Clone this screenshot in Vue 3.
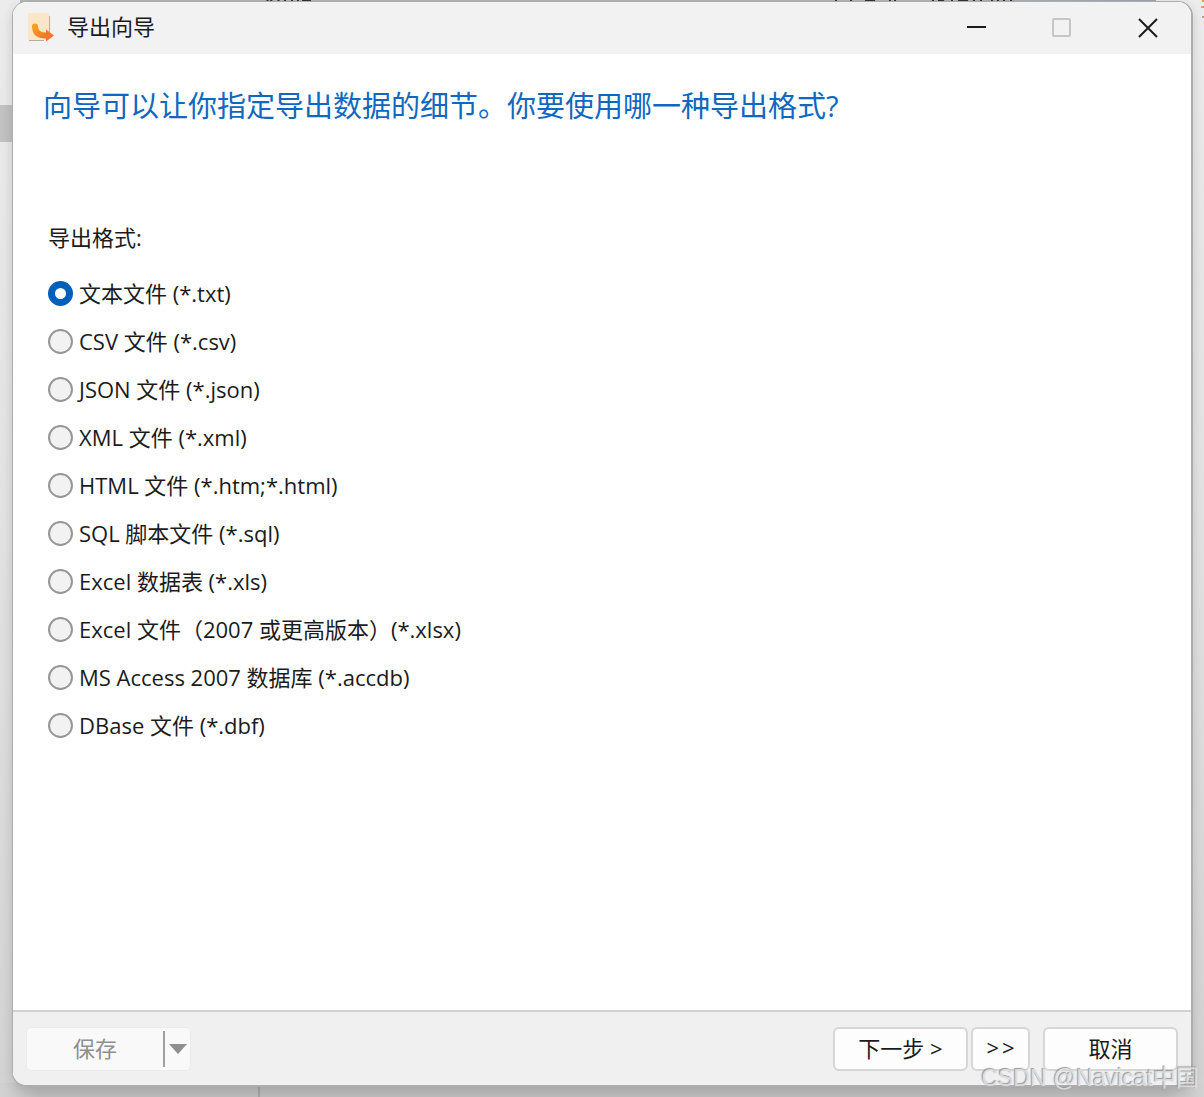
<template>
  <div class="desktop">
    <div class="backdrop" aria-hidden="true">
      <span class="backdrop-row"></span>
      <span class="backdrop-bar"></span>
      <span class="backdrop-floor"></span>
      <span class="backdrop-split"></span>
      <svg class="backdrop-bits bits-left" width="54" height="3" viewBox="0 0 54 3">
        <path d="M10 0l-2 3M14 0l-3 3M21 0l-2 3M27 0v3M34 0v3M40 0v3M44 1h8M46 0v3M52 0v3" />
      </svg>
      <svg class="backdrop-bits bits-right" width="190" height="3" viewBox="0 0 190 3">
        <path d="M4 0v3M19 0v3M33 1h10M36 0v3M40 0v3M58 0v3M63 0v3M101 0v3M106 1h6M110 0l4 3M120 0v3M126 1h10M130 0v3M142 0v3M149 0v3M160 0v3M166 0v3M172 0v3M179 0v3" />
      </svg>
      <svg class="backdrop-bits bits-edge" width="4" height="20" viewBox="0 0 4 20">
        <path d="M2 1h2M1 7h3M2 17h2" />
      </svg>
    </div>

    <main class="wizard">
      <header class="title-bar">
        <svg class="app-icon" width="32" height="32" viewBox="0 0 32 32" aria-hidden="true">
          <path d="M5 1h17a2 2 0 0 1 2 2v25H3V3a2 2 0 0 1 2-2z" fill="#fce6c8" />
          <path d="M24.500 4v16M4 28.500h15" stroke="#b9aa99" stroke-width="1" />
          <path d="M10 14.500c0 6 3.500 9 11 9" fill="none" stroke="url(#arrowFill)" stroke-width="6" stroke-linecap="round" />
          <path d="M21 17.500L29 23.500L21 29.500z" fill="#fb7427" />
          <defs>
            <linearGradient id="arrowFill" x1="0" y1="0" x2="1" y2="1">
              <stop offset="0" stop-color="#fb9f22" />
              <stop offset="1" stop-color="#fb7427" />
            </linearGradient>
          </defs>
        </svg>
        <h1 class="title">导出向导</h1>
        <div class="window-controls">
          <button type="button" class="control" aria-label="最小化">
            <svg width="20" height="20" viewBox="0 0 20 20"><path d="M1 9h19" stroke="#1b1b1b" stroke-width="2" /></svg>
          </button>
          <button type="button" class="control" aria-label="最大化" disabled>
            <svg width="20" height="20" viewBox="0 0 20 20">
              <rect x="1" y="1" width="17" height="17" rx="1" fill="none" stroke="#c6c6c6" stroke-width="2" />
            </svg>
          </button>
          <button type="button" class="control" aria-label="关闭">
            <svg width="20" height="20" viewBox="0 0 20 20">
              <path d="M1 1l18 18M19 1L1 19" stroke="#1b1b1b" stroke-width="2" />
            </svg>
          </button>
        </div>
      </header>

      <section class="content">
        <h2 class="heading">向导可以让你指定导出数据的细节。你要使用哪一种导出格式?</h2>
        <fieldset class="formats">
          <legend class="formats-label">导出格式:</legend>
          <label v-for="item in formats" :key="item.value" class="format">
            <input v-model="selected" type="radio" name="format" class="radio" :value="item.value" />
            <span>{{ item.label }}</span>
          </label>
        </fieldset>
      </section>

      <footer class="footer">
        <div class="save-group">
          <button type="button" class="save" disabled>保存</button>
          <button type="button" class="save-menu" aria-label="保存选项" disabled>
            <svg width="18" height="10" viewBox="0 0 18 10"><path d="M0 0h18L9 10z" fill="#8f8f8f" /></svg>
          </button>
        </div>
        <div class="nav-group">
          <button type="button" class="btn btn-wide">下一步 &gt;</button>
          <button type="button" class="btn btn-small"><span>&gt;</span><span>&gt;</span></button>
        </div>
        <button type="button" class="btn btn-wide">取消</button>
      </footer>
    </main>

    <span class="watermark">CSDN @Navicat中国</span>
  </div>
</template>

<script setup>
import { ref } from 'vue'

const selected = ref('txt')

const formats = [
  { value: 'txt', label: '文本文件 (*.txt)' },
  { value: 'csv', label: 'CSV 文件 (*.csv)' },
  { value: 'json', label: 'JSON 文件 (*.json)' },
  { value: 'xml', label: 'XML 文件 (*.xml)' },
  { value: 'html', label: 'HTML 文件 (*.htm;*.html)' },
  { value: 'sql', label: 'SQL 脚本文件 (*.sql)' },
  { value: 'xls', label: 'Excel 数据表 (*.xls)' },
  { value: 'xlsx', label: 'Excel 文件（2007 或更高版本）(*.xlsx)' },
  { value: 'accdb', label: 'MS Access 2007 数据库 (*.accdb)' },
  { value: 'dbf', label: 'DBase 文件 (*.dbf)' }
]
</script>

<style>
body { margin: 0; }
</style>

<style scoped>
.desktop {
  position: relative;
  display: flex;
  min-height: 100vh;
  box-sizing: border-box;
  padding: 1px 11px 10px 12px;
  overflow: hidden;
  background: linear-gradient(#ececec, #e2e2e2 50%, #d2d2d2);
  font-family: "Open Sans", "Noto Sans CJK SC", sans-serif;
  font-size: 22px;
  color: #1b1b1b;
}
.backdrop { position: absolute; inset: 0; }
.backdrop-row { position: absolute; left: 0; top: 105px; width: 40px; height: 37px; background: #c2c2c2; }
.backdrop-bar {
  position: absolute; left: 20px; right: 48px; top: 0; height: 3px;
  background: linear-gradient(90deg, #b5b5b5 80%, #9aa5b1);
}
.backdrop-floor {
  position: absolute; left: 0; right: 0; bottom: 0; height: 14px;
  background: linear-gradient(90deg, #d2d2d2, #bebebe 40px, #bebebe calc(100% - 40px), #d2d2d2);
}
.backdrop-split { position: absolute; left: 258px; bottom: 0; width: 2px; height: 20px; background: #a5a5a5; }
.backdrop-bits { position: absolute; top: 0; fill: none; stroke: #333333; stroke-width: 2; }
.bits-left { left: 258px; }
.bits-right { left: 832px; }
.bits-edge { right: 0; stroke: #e0a050; }

.wizard {
  position: relative;
  flex: 1;
  display: flex;
  flex-direction: column;
  min-width: 0;
  overflow: hidden;
  background: #ffffff;
  border: 2px solid #adadad;
  border-left-width: 1px;
  border-top-width: 1px;
  border-radius: 15px;
  box-shadow: 0 4px 12px rgba(0, 0, 0, 0.15);
}

.title-bar {
  display: flex;
  align-items: center;
  height: 52px;
  padding-left: 12px;
  background: #f2f2f2;
}
.app-icon { margin-right: 10px; }
.title { margin: 0; padding-bottom: 4px; font-size: 22px; line-height: 32px; font-weight: 400; }
.window-controls { display: flex; align-self: stretch; margin-left: auto; }
.control {
  display: flex; align-items: center; justify-content: center;
  width: 86px; padding: 0; border: none; background: transparent;
}

.content { flex: 1; padding: 32px 30px 24px; }
.heading { margin: 0; font-size: 29px; line-height: 40px; font-weight: 400; color: #0f68c0; }
.formats { margin: 95px 0 0; padding: 0 5px; border: none; }
.formats-label { padding: 0; margin-bottom: 16px; line-height: 32px; }
.format { display: flex; align-items: center; gap: 6px; height: 48px; line-height: 32px; white-space: nowrap; }
.radio {
  appearance: none;
  flex: none;
  width: 25px; height: 25px; margin: 0;
  box-sizing: border-box;
  border: 2px solid #979797;
  border-radius: 50%;
  background: #f2f2f2;
}
.radio:checked { border: 7px solid #005fb8; background: #ffffff; }

.footer {
  display: flex;
  align-items: center;
  gap: 13px;
  height: 73px;
  padding: 0 13px;
  border-top: 2px solid #d2d2d2;
  background: #f0f0f0;
}
.save-group {
  display: flex;
  align-items: center;
  height: 44px;
  box-sizing: border-box;
  margin-right: auto;
  border: 1px solid #ebebeb;
  border-radius: 5px;
  background: #f9f9f9;
}
.save, .save-menu {
  display: flex; align-items: center; justify-content: center;
  padding: 0; border: none; background: transparent;
  font: inherit; color: #8f8f8f;
}
.save { width: 136px; height: 36px; padding-bottom: 4px; }
.save-menu { width: 27px; height: 36px; border-left: 2px solid #a0a0a0; }
.nav-group { display: flex; gap: 3px; }
.btn {
  display: flex; align-items: center; justify-content: center; gap: 3px;
  height: 44px; padding: 0 0 3px;
  box-sizing: border-box;
  border: 2px solid #d6d6d6;
  border-radius: 6px;
  background: #fdfdfd;
  font: inherit; color: #1b1b1b;
}
.btn-wide { width: 135px; }
.btn-small { width: 59px; }

.watermark {
  position: absolute;
  right: 5px;
  bottom: 3px;
  font-family: "Liberation Sans", "Noto Sans CJK SC", sans-serif;
  font-size: 23px;
  line-height: 32px;
  color: rgba(225, 225, 225, 0.9);
  text-shadow: -1px -1px 1px #999999;
}
</style>
